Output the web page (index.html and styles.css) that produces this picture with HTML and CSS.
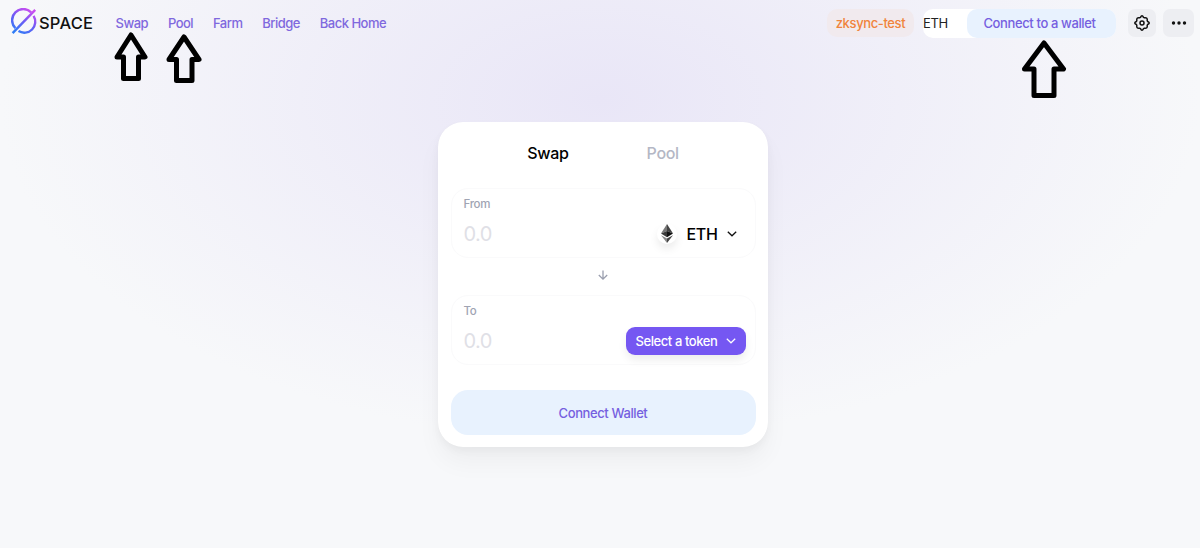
FILE: index.html
```html
<!DOCTYPE html>
<html lang="en">
<head>
    <meta charset="UTF-8">
    <meta name="viewport" content="width=device-width, initial-scale=1.0">
    <title>ZKSpace | Swap</title>
    <link rel="stylesheet" href="styles.css">
</head>
<body>

    <!-- Top bar -->
    <header>
        <a href="#" class="logo">
            <svg width="27" height="27" viewBox="0 0 27 27" fill="none">
                <defs>
                    <linearGradient id="logoFill" x1="6" y1="25" x2="19" y2="2" gradientUnits="userSpaceOnUse">
                        <stop offset="0" stop-color="#2f7df6"/>
                        <stop offset="0.5" stop-color="#6a5cf5"/>
                        <stop offset="1" stop-color="#c94df0"/>
                    </linearGradient>
                </defs>
                <g stroke="url(#logoFill)" stroke-width="2.4">
                    <path d="M20.2 4.3A11 11 0 0 0 4.4 20.2"/>
                    <path d="M7.5 23.1A11 11 0 0 0 22.6 7.9"/>
                    <path d="M1.6 25.2L24.2 1.8"/>
                </g>
            </svg>
            <span>SPACE</span>
        </a>
        <nav>
            <a href="#">Swap</a>
            <a href="#">Pool</a>
            <a href="#">Farm</a>
            <a href="#">Bridge</a>
            <a href="#">Back Home</a>
        </nav>
        <div class="actions">
            <span class="network">zksync-test</span>
            <div class="account">
                <span class="balance">ETH</span>
                <button class="connect">Connect to a wallet</button>
            </div>
            <button class="icon-btn settings">
                <svg width="16" height="16" viewBox="0 0 16 16" fill="none" stroke="#111" stroke-width="1.5" stroke-linejoin="round">
                    <circle cx="8" cy="8" r="2"/>
                    <path d="M6.5 2.4Q8-.9 9.5 2.4L10.4 2.8Q13.8 2.2 13.2 5.6L13.6 6.5Q16.9 8 13.6 9.5L13.2 10.4Q13.8 13.8 10.4 13.2L9.5 13.6Q8 16.9 6.5 13.6L5.6 13.2Q2.2 13.8 2.8 10.4L2.4 9.5Q-.9 8 2.4 6.5L2.8 5.6Q2.2 2.2 5.6 2.8z"/>
                </svg>
            </button>
            <button class="icon-btn more">
                <svg width="16" height="4" viewBox="0 0 16 4" fill="#111">
                    <circle cx="2.5" cy="2" r="1.7"/>
                    <circle cx="8" cy="2" r="1.7"/>
                    <circle cx="13.5" cy="2" r="1.7"/>
                </svg>
            </button>
        </div>
    </header>

    <!-- Swap card -->
    <main>
        <div class="card">
            <div class="tabs">
                <a href="#" class="active">Swap</a>
                <a href="#">Pool</a>
            </div>

            <div class="panel">
                <div class="label">From</div>
                <div class="row">
                    <span class="amount">0.0</span>
                    <button class="token">
                        <span class="coin">
                            <svg width="12" height="19" viewBox="0 0 12 19">
                                <path d="M6 0L0 9.6 6 7z" fill="#777"/>
                                <path d="M6 0l6 9.6L6 7z" fill="#444"/>
                                <path d="M0 9.6L6 7v6.2z" fill="#3a3a3a"/>
                                <path d="M12 9.6L6 7v6.2z" fill="#111"/>
                                <path d="M0 11.2l6 3.4V19z" fill="#888"/>
                                <path d="M12 11.2l-6 3.4V19z" fill="#444"/>
                            </svg>
                        </span>
                        ETH
                        <svg class="chevron" width="10" height="6" viewBox="0 0 10 6" fill="none" stroke="#111" stroke-width="1.3">
                            <path d="M.8.8L5 4.8 9.2.8"/>
                        </svg>
                    </button>
                </div>
            </div>

            <div class="switch">
                <svg width="10" height="10" viewBox="0 0 10 10" fill="none" stroke="#9a9eae" stroke-width="1.3">
                    <path d="M5 .5v8.5M.8 5L5 9.1 9.2 5"/>
                </svg>
            </div>

            <div class="panel">
                <div class="label">To</div>
                <div class="row">
                    <span class="amount">0.0</span>
                    <button class="select">
                        Select a token
                        <svg class="chevron" width="10" height="6" viewBox="0 0 10 6" fill="none" stroke="#fff" stroke-width="1.2">
                            <path d="M.8.8L5 4.8 9.2.8"/>
                        </svg>
                    </button>
                </div>
            </div>

            <button class="submit">Connect Wallet</button>
        </div>
    </main>

    <!-- Pointers laid over the page -->
    <svg class="pointer pointer-swap" width="34" height="50" viewBox="0 0 34 50">
        <path d="M17 3L31 25H24.5V46.5H9.5V25H3z"/>
    </svg>
    <svg class="pointer pointer-pool" width="36" height="50" viewBox="0 0 36 50">
        <path d="M18 3L33 25.5H26V46.5H10.5V25.5H3z"/>
    </svg>
    <svg class="pointer pointer-wallet" width="46" height="59" viewBox="0 0 46 59">
        <path d="M23 3L42.5 29H33V55.5H13V29H3.5z"/>
    </svg>

</body>
</html>
```
FILE: styles.css
```css
/* General */
* {
    box-sizing: border-box;
}

body {
    margin: 0;
    min-height: 100vh;
    font-family: Inter, "Liberation Sans", sans-serif;
    font-weight: 500;
    color: #000;
    background: #f7f8fa radial-gradient(600px 340px at 600px 100px, #e9e6f7 0%, #f7f8fa 100%) no-repeat;
}

a {
    text-decoration: none;
    color: inherit;
}

button {
    border: none;
    padding: 0;
    font: inherit;
    letter-spacing: inherit;
    cursor: pointer;
}

/* Top bar */
header {
    display: flex;
    align-items: center;
    height: 46px;
    padding: 0 6px 0 11px;
}

.logo {
    display: flex;
    align-items: center;
    width: 104.5px;
    font-size: 16.5px;
    letter-spacing: 0.2px;
    color: #111;
}

.logo svg {
    margin: -4px 1px 0 0;
}

nav {
    display: flex;
    gap: 19.8px;
    font-size: 13px;
    letter-spacing: -0.5px;
    color: #7f68de;
}

.actions {
    display: flex;
    align-items: center;
    margin-left: auto;
    font-size: 13px;
    letter-spacing: -0.38px;
}

.network {
    width: 87px;
    height: 28px;
    line-height: 28px;
    margin-right: 9px;
    border-radius: 10px;
    text-align: center;
    color: #f0843c;
    background: #f1eaee;
}

.account {
    display: flex;
    width: 193px;
    height: 29px;
    line-height: 29px;
    margin-right: 12px;
    border-radius: 10px;
    background: #fff;
}

.balance {
    width: 44px;
    font-weight: 400;
    color: #222;
}

.connect {
    width: 149px;
    padding-right: 4px;
    border-radius: 10px;
    color: #755fe0;
    background: #e8f2fe;
}

.icon-btn {
    display: flex;
    align-items: center;
    justify-content: center;
    width: 28px;
    height: 28px;
    border-radius: 7px;
    background: #edeef2;
}

.more {
    width: 31px;
    margin-left: 7px;
}

/* Swap card */
.card {
    width: 330px;
    height: 325px;
    margin: 76px 0 0 438px;
    padding: 13px 12.5px;
    border-radius: 25px;
    background: #fff;
    box-shadow: 0 0 1px rgba(0, 0, 0, 0.03), 0 4px 8px rgba(0, 0, 0, 0.04), 0 16px 24px rgba(0, 0, 0, 0.04);
}

.tabs {
    display: flex;
    justify-content: center;
    gap: 78px;
    height: 53px;
    line-height: 37px;
    font-size: 16px;
    letter-spacing: -0.3px;
    color: #b4b7c5;
}

.tabs .active {
    color: #000;
}

.panel {
    height: 70px;
    padding: 8px 9px 0 12px;
    border: 1px solid #fafafb;
    border-radius: 17px;
}

.label {
    height: 15px;
    line-height: 15px;
    font-size: 11.5px;
    letter-spacing: -0.3px;
    color: #a0a4b3;
}

.row {
    display: flex;
    align-items: center;
    justify-content: space-between;
    height: 43px;
}

.amount {
    font-size: 20px;
    font-weight: 400;
    letter-spacing: -0.5px;
    color: #dfe0e6;
}

.token {
    display: flex;
    align-items: center;
    padding-right: 9px;
    font-size: 16px;
    letter-spacing: -0.3px;
    background: none;
}

.coin {
    display: flex;
    align-items: center;
    justify-content: center;
    width: 20px;
    height: 20px;
    margin-right: 9px;
    border-radius: 50%;
    box-shadow: 0 5px 8px rgba(0, 0, 0, 0.08);
}

.chevron {
    margin-left: 9px;
}

.select {
    display: flex;
    align-items: center;
    width: 120px;
    height: 28px;
    padding-left: 10px;
    border-radius: 9px;
    font-size: 13px;
    letter-spacing: -0.42px;
    color: #fff;
    background: #7557f2;
    box-shadow: 0 5px 8px rgba(0, 0, 0, 0.07);
}

.switch {
    display: flex;
    align-items: center;
    justify-content: center;
    height: 37px;
    padding-bottom: 4px;
}

.submit {
    width: 100%;
    height: 45px;
    margin-top: 25px;
    border-radius: 17px;
    font-size: 13px;
    letter-spacing: -0.4px;
    color: #755fe0;
    background: #e8f2fe;
}

/* Pointers */
.pointer {
    position: absolute;
    fill: none;
    stroke: #000;
    stroke-width: 5;
    stroke-linejoin: round;
}

.pointer-swap {
    left: 114px;
    top: 32px;
}

.pointer-pool {
    left: 166px;
    top: 34px;
}

.pointer-wallet {
    left: 1021px;
    top: 40px;
}
```
